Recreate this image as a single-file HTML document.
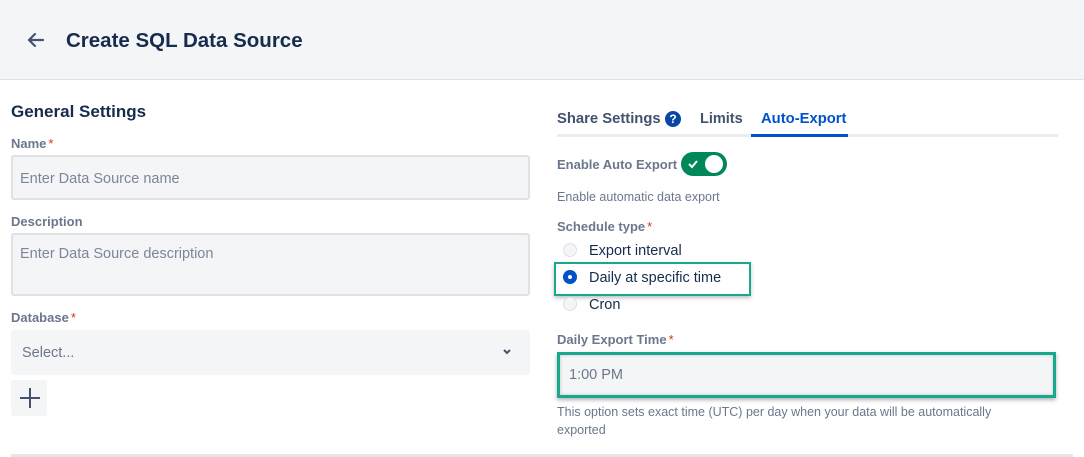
<!DOCTYPE html>
<html><head><meta charset="utf-8"><style>
*{box-sizing:border-box;margin:0;padding:0}
body{width:1084px;height:457px;background:#fff;font-family:"Liberation Sans",sans-serif;position:relative;overflow:hidden;color:#172b4d}
.a{position:absolute;white-space:nowrap}
.hdr{position:absolute;left:0;top:0;width:1084px;height:80px;background:#f4f5f7;border-bottom:1px solid #dfe1e6}
.lbl{font-size:13px;font-weight:bold;color:#6b778c}
.lbl b{color:#de350b;font-weight:normal;margin-left:2px}
.inp{position:absolute;background:#f4f5f7;border:2px solid #dfe1e6;border-radius:3px}
.ph{font-size:14.5px;color:#7a869a}
.tab{font-size:15px;font-weight:bold;color:#42526e}
.radio{position:absolute;width:14px;height:14px;border-radius:50%;border:1px solid #dfe1e6;background:#f4f5f7}
.rt{font-size:14.5px;color:#172b4d}
.hint{font-size:12.5px;color:#6b778c}
</style></head><body>
<div class="hdr"></div>
<svg class="a" style="left:26px;top:31px" width="20" height="18" viewBox="0 0 20 18"><path d="M17 9H3M9 3L3 9l6 6" stroke="#42526e" stroke-width="2.2" fill="none" stroke-linecap="round" stroke-linejoin="round"/></svg>
<div class="a" style="left:66px;top:29px;font-size:20.5px;font-weight:bold;color:#172b4d">Create SQL Data Source</div>

<div class="a" style="left:11px;top:102px;font-size:17px;font-weight:bold">General Settings</div>
<div class="a lbl" style="left:11px;top:136px">Name<b>*</b></div>
<div class="inp" style="left:11px;top:155px;width:519px;height:45px"></div>
<div class="a ph" style="left:20px;top:171px">Enter Data Source name</div>
<div class="a lbl" style="left:11px;top:214px">Description</div>
<div class="inp" style="left:11px;top:233px;width:519px;height:63px"></div>
<div class="a ph" style="left:20px;top:246px">Enter Data Source description</div>
<div class="a lbl" style="left:11px;top:310px">Database<b>*</b></div>
<div class="a" style="left:11px;top:330px;width:519px;height:45px;background:#f4f5f7;border-radius:3px"></div>
<div class="a" style="left:22px;top:345px;font-size:14.5px;color:#6b778c">Select...</div>
<svg class="a" style="left:502px;top:348px" width="10" height="8" viewBox="0 0 10 8"><path d="M2 2l3 3 3-3" stroke="#42526e" stroke-width="2" fill="none"/></svg>
<div class="a" style="left:11px;top:380px;width:36px;height:36px;background:#f4f5f7;border-radius:3px"></div>
<svg class="a" style="left:19px;top:387px" width="22" height="22" viewBox="0 0 22 22"><path d="M11 1v20M1 11h20" stroke="#42526e" stroke-width="2"/></svg>

<div class="a tab" style="left:557px;top:111px;font-size:14.8px">Share Settings</div>
<div class="a" style="left:665px;top:111px;width:16px;height:16px;border-radius:50%;background:#0747a6;color:#fff;font-size:12px;font-weight:bold;text-align:center;line-height:16px">?</div>
<div class="a tab" style="left:700px;top:111px;font-size:14.5px">Limits</div>
<div class="a tab" style="left:761px;top:111px;color:#0052cc;font-size:14.8px">Auto-Export</div>
<div class="a" style="left:557px;top:134px;width:501px;height:3px;background:#ebecf0"></div>
<div class="a" style="left:751px;top:134px;width:97px;height:3px;background:#0052cc"></div>

<div class="a lbl" style="left:557px;top:157px">Enable Auto Export</div>
<div class="a" style="left:681px;top:152px;width:46px;height:24px;border-radius:12px;background:#00875a"></div>
<div class="a" style="left:705px;top:155px;width:18px;height:18px;border-radius:50%;background:#fff"></div>
<svg class="a" style="left:686px;top:157px" width="14" height="14" viewBox="0 0 14 14"><path d="M3 7l3 3 5-6" stroke="#fff" stroke-width="2" fill="none"/></svg>
<div class="a hint" style="left:557px;top:190px">Enable automatic data export</div>
<div class="a lbl" style="left:557px;top:219px">Schedule type<b>*</b></div>
<div class="radio" style="left:563px;top:243px"></div>
<div class="a rt" style="left:589px;top:243px">Export interval</div>
<div class="a" style="left:554px;top:262px;width:197px;height:34px;border:2px solid #17a88d;box-shadow:0 2px 4px rgba(0,0,0,.25)"></div>
<div class="a" style="left:563px;top:270px;width:14px;height:14px;border-radius:50%;background:#0052cc"></div>
<div class="a" style="left:568px;top:275px;width:4px;height:4px;border-radius:50%;background:#fff"></div>
<div class="a rt" style="left:589px;top:270px">Daily at specific time</div>
<div class="radio" style="left:563px;top:297px"></div>
<div class="a rt" style="left:589px;top:297px">Cron</div>

<div class="a lbl" style="left:557px;top:332px">Daily Export Time<b>*</b></div>
<div class="a" style="left:557px;top:352px;width:499px;height:46px;background:#f4f5f7;border:3px solid #17a88d;box-shadow:0 2px 4px rgba(0,0,0,.3), inset 0 0 3px rgba(0,0,0,.2)"></div>
<div class="a ph" style="left:569px;top:367px;color:#6b778c">1:00 PM</div>
<div class="a hint" style="left:557px;top:405px">This option sets exact time (UTC) per day when your data will be automatically</div>
<div class="a hint" style="left:557px;top:423px">exported</div>

<div class="a" style="left:11px;top:454px;width:1062px;height:3px;background:#e4e5e9"></div>
</body></html>
